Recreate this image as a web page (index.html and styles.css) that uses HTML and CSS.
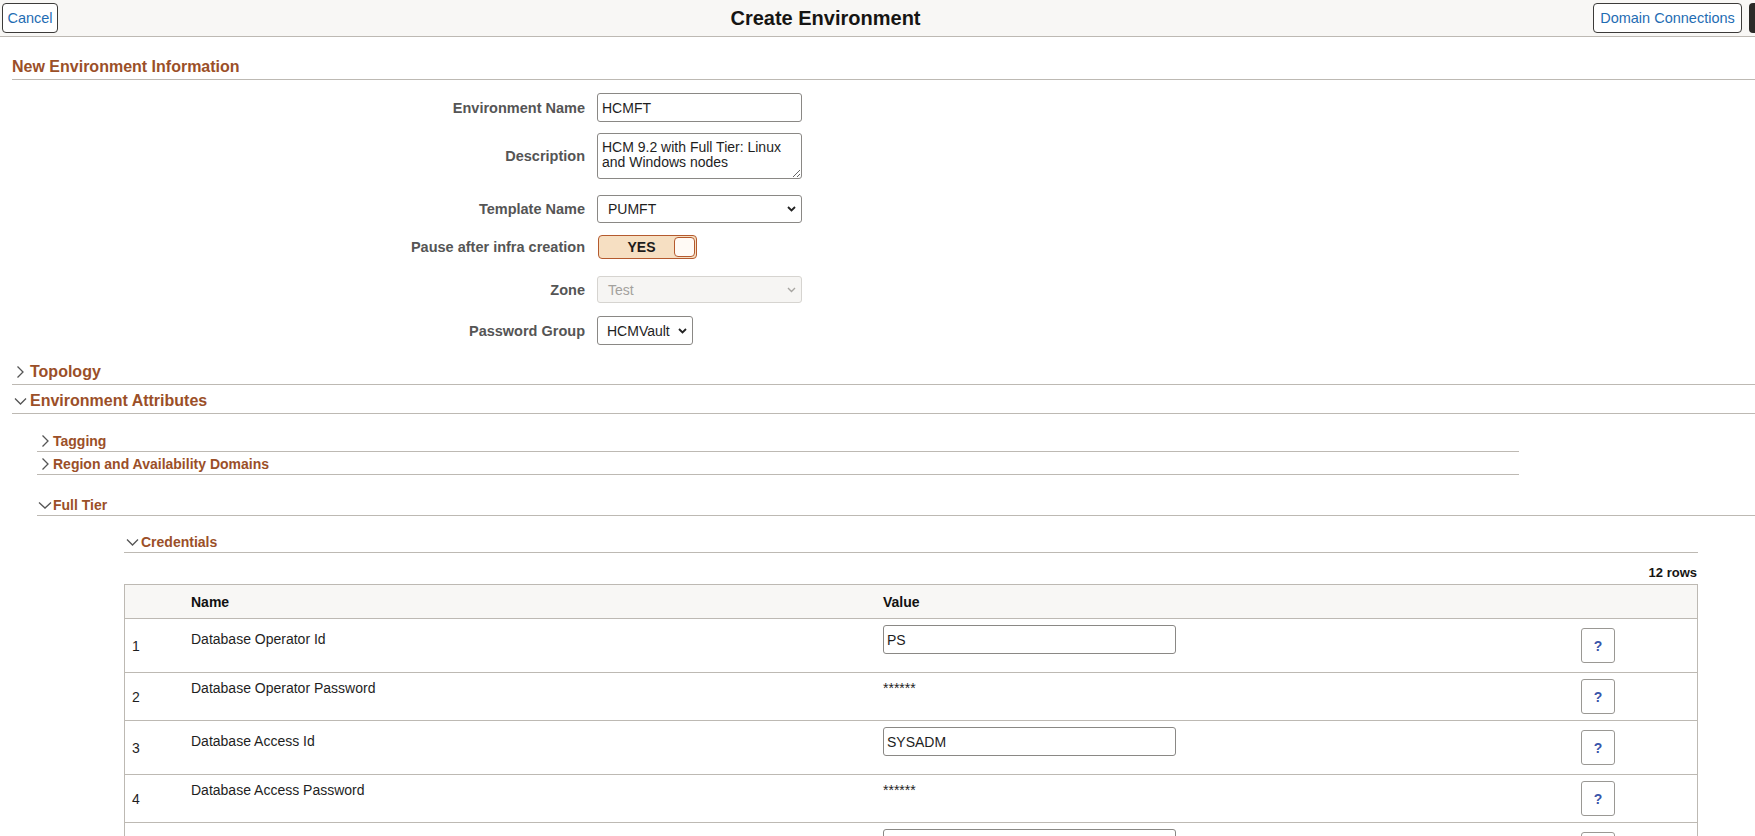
FILE: index.html
```html
<!DOCTYPE html>
<html lang="en">
<head>
<meta charset="utf-8">
<title>Create Environment</title>
<link rel="stylesheet" href="styles.css">
</head>
<body>
<header class="topbar">
  <button class="btn cancel">Cancel</button>
  <div class="title">Create Environment</div>
  <button class="btn domain">Domain Connections</button>
  <div class="more"></div>
</header>

<main class="content">
  <div class="sec-title">New Environment Information</div>

  <div class="frow r1">
    <label class="flabel">Environment Name</label>
    <input class="txt" type="text" value="HCMFT">
  </div>
  <div class="frow r2">
    <label class="flabel">Description</label>
    <textarea class="area">HCM 9.2 with Full Tier: Linux and Windows nodes</textarea>
  </div>
  <div class="frow r3">
    <label class="flabel">Template Name</label>
    <div class="sel wide"><span>PUMFT</span>
      <svg class="chev" width="9" height="6" viewBox="0 0 9 6"><polyline points="1,1 4.5,4.5 8,1" fill="none" stroke="#222" stroke-width="1.8"/></svg>
    </div>
  </div>
  <div class="frow r4">
    <label class="flabel">Pause after infra creation</label>
    <div class="toggle"><span class="toggle-label">YES</span><span class="knob"></span></div>
  </div>
  <div class="frow r5">
    <label class="flabel">Zone</label>
    <div class="sel wide disabled"><span>Test</span>
      <svg class="chev" width="9" height="6" viewBox="0 0 9 6"><polyline points="1,1 4.5,4.5 8,1" fill="none" stroke="#a8a6a2" stroke-width="1.4"/></svg>
    </div>
  </div>
  <div class="frow r6">
    <label class="flabel">Password Group</label>
    <div class="sel narrow"><span>HCMVault</span>
      <svg class="chev" width="9" height="6" viewBox="0 0 9 6"><polyline points="1,1 4.5,4.5 8,1" fill="none" stroke="#222" stroke-width="1.8"/></svg>
    </div>
  </div>

  <div class="grp-head topology">
    <svg class="ico" width="14" height="14" viewBox="0 0 14 14"><polyline points="3.5,1.5 9,7 3.5,12.5" fill="none" stroke="#555" stroke-width="1.3"/></svg>
    <span>Topology</span>
  </div>
  <div class="grp-head">
    <svg class="ico" width="14" height="14" viewBox="0 0 14 14"><polyline points="1,4.5 6.5,10 12,4.5" fill="none" stroke="#555" stroke-width="1.3"/></svg>
    <span>Environment Attributes</span>
  </div>

  <div class="subs">
    <div class="sub-head short">
      <svg class="ico" width="14" height="14" viewBox="0 0 14 14"><polyline points="4.5,1.5 10,7 4.5,12.5" fill="none" stroke="#555" stroke-width="1.3"/></svg>
      <span>Tagging</span>
    </div>
    <div class="sub-head short">
      <svg class="ico" width="14" height="14" viewBox="0 0 14 14"><polyline points="4.5,1.5 10,7 4.5,12.5" fill="none" stroke="#555" stroke-width="1.3"/></svg>
      <span>Region and Availability Domains</span>
    </div>
    <div class="sub-head fulltier">
      <svg class="ico" width="14" height="14" viewBox="0 0 14 14"><polyline points="1,4.5 7,10 13,4.5" fill="none" stroke="#555" stroke-width="1.3"/></svg>
      <span>Full Tier</span>
    </div>

    <div class="cred">
      <div class="sub-head credhead">
        <svg class="ico" width="14" height="14" viewBox="0 0 14 14"><polyline points="1,4.5 6.5,10 12,4.5" fill="none" stroke="#555" stroke-width="1.3"/></svg>
        <span>Credentials</span>
      </div>
      <div class="rows-count">12 rows</div>
      <div class="tbl">
        <div class="tr th">
          <div class="c-num"></div>
          <div class="c-name">Name</div>
          <div class="c-val">Value</div>
          <div class="c-btn"></div>
        </div>
        <div class="tr tall">
          <div class="c-num">1</div>
          <div class="c-name">Database Operator Id</div>
          <div class="c-val inp"><input class="vinput" type="text" value="PS"></div>
          <div class="c-btn"><button class="help">?</button></div>
        </div>
        <div class="tr">
          <div class="c-num">2</div>
          <div class="c-name">Database Operator Password</div>
          <div class="c-val">******</div>
          <div class="c-btn"><button class="help">?</button></div>
        </div>
        <div class="tr tall">
          <div class="c-num">3</div>
          <div class="c-name">Database Access Id</div>
          <div class="c-val inp"><input class="vinput" type="text" value="SYSADM"></div>
          <div class="c-btn"><button class="help">?</button></div>
        </div>
        <div class="tr">
          <div class="c-num">4</div>
          <div class="c-name">Database Access Password</div>
          <div class="c-val">******</div>
          <div class="c-btn"><button class="help">?</button></div>
        </div>
        <div class="tr tall">
          <div class="c-num">5</div>
          <div class="c-name">Weblogic Administrator Username</div>
          <div class="c-val inp"><input class="vinput" type="text" value="system"></div>
          <div class="c-btn"><button class="help">?</button></div>
        </div>
      </div>
    </div>
  </div>
</main>
</body>
</html>
```
FILE: styles.css
```css
* { box-sizing: border-box; }

body {
  margin: 0;
  font-family: "Liberation Sans", Arial, sans-serif;
  font-size: 14px;
  color: #222;
  background: #fff;
}

/* top bar */
.topbar {
  display: flex;
  align-items: center;
  height: 37px;
  padding-left: 2px;
  background: #f8f7f5;
  border-bottom: 1px solid #bdb9b3;
}
.btn {
  height: 30px;
  padding: 0 4px;
  background: #fff;
  border: 1px solid #3c3b39;
  border-radius: 4px;
  color: #1f6db3;
  font-family: "Liberation Sans", Arial, sans-serif;
  font-size: 14.5px;
}
.cancel { width: 56px; }
.domain { width: 149px; }
.title {
  flex: 1;
  text-align: center;
  font-size: 20px;
  font-weight: bold;
  color: #161513;
}
.more {
  width: 6px;
  height: 30px;
  margin-left: 7px;
  background: #2b2a28;
  border-radius: 4px 0 0 4px;
}

/* content */
.content { padding-left: 12px; }

.sec-title {
  margin-top: 20px;
  padding-bottom: 2px;
  line-height: 20px;
  font-size: 16px;
  font-weight: bold;
  color: #9b4f28;
  border-bottom: 1px solid #bdb9b3;
}

/* form */
.frow { display: flex; align-items: center; }
.r1 { margin-top: 13px; }
.r2 { margin-top: 11px; }
.r3 { margin-top: 16px; }
.r4 { margin-top: 12px; }
.r5 { margin-top: 17px; }
.r6 { margin-top: 13px; }

.flabel {
  width: 585px;
  padding-right: 12px;
  text-align: right;
  font-size: 14.5px;
  font-weight: bold;
  color: #555;
}
.txt {
  width: 205px;
  height: 29px;
  padding: 0 4px;
  border: 1px solid #8a8885;
  border-radius: 3px;
  font-family: "Liberation Sans", Arial, sans-serif;
  font-size: 14px;
  color: #1e1e1e;
}
.area {
  width: 205px;
  height: 46px;
  padding: 6px 4px;
  border: 1px solid #8a8885;
  border-radius: 3px;
  font-family: "Liberation Sans", Arial, sans-serif;
  font-size: 14px;
  line-height: 15px;
  color: #1e1e1e;
  resize: both;
}
.sel {
  display: flex;
  align-items: center;
  justify-content: space-between;
  padding: 0 5px 0 10px;
  background: #fff;
  border: 1px solid #8a8885;
  border-radius: 3px;
  font-size: 14px;
  color: #1e1e1e;
}
.sel.wide { width: 205px; height: 28px; }
.sel.narrow { width: 96px; height: 29px; padding-left: 9px; }
.sel.disabled {
  height: 27px;
  background: #f6f5f3;
  border-color: #d6d4d0;
  color: #a3a19d;
}
.chev { display: block; }

.toggle {
  display: flex;
  align-items: center;
  width: 99px;
  height: 24px;
  margin-left: 1px;
  padding-right: 1px;
  background: #f6dfc2;
  border: 1px solid #b45a2e;
  border-radius: 4px;
}
.toggle-label {
  flex: 1;
  padding-left: 10px;
  text-align: center;
  font-size: 14px;
  font-weight: bold;
  color: #1c1b1a;
}
.knob {
  width: 21px;
  height: 20px;
  background: #fffaf5;
  border: 1px solid #b45a2e;
  border-radius: 4px;
}

/* collapsible headers */
.grp-head {
  display: flex;
  align-items: center;
  gap: 2px;
  padding: 6px 0 2px 2px;
  line-height: 20px;
  font-size: 16px;
  font-weight: bold;
  color: #9b4f28;
  border-bottom: 1px solid #bdb9b3;
}
.topology { margin-top: 11px; }
.ico { display: block; flex: none; }

.subs { margin-left: 25px; margin-top: 15px; }
.sub-head {
  display: flex;
  align-items: center;
  gap: 1px;
  padding: 4px 0 2px 1px;
  line-height: 16px;
  font-size: 14px;
  font-weight: bold;
  color: #9b4f28;
  border-bottom: 1px solid #bdb9b3;
}
.sub-head.short { width: 1482px; }
.fulltier { margin-top: 18px; }

.cred { margin-left: 87px; margin-right: 57px; margin-top: 14px; }
.credhead { padding-left: 2px; }

.rows-count {
  margin-top: 12px;
  margin-bottom: 3px;
  padding-right: 1px;
  line-height: 16px;
  text-align: right;
  font-size: 13px;
  font-weight: bold;
  color: #161513;
}

/* table */
.tbl { border: 1px solid #bdb9b3; border-bottom: none; }
.tr {
  display: grid;
  grid-template-columns: 66px 692px 690px 1fr;
  align-items: start;
  height: 48px;
  border-bottom: 1px solid #bdb9b3;
  font-size: 14px;
  color: #1e1e1e;
}
.tr.tall { height: 54px; }
.tr.th {
  height: 34px;
  align-items: center;
  background: #f8f7f5;
  font-weight: bold;
  color: #111;
}
.c-num { padding-left: 7px; align-self: center; }
.c-name, .c-val { padding-top: 7px; line-height: 16px; }
.tall .c-name { padding-top: 12px; }
.th .c-name, .th .c-val { padding-top: 0; }
.c-val.inp { padding-top: 6px; }
.c-btn { padding-left: 8px; align-self: center; }

.vinput {
  display: block;
  width: 293px;
  height: 29px;
  padding: 0 3px;
  border: 1px solid #8a8885;
  border-radius: 3px;
  font-family: "Liberation Sans", Arial, sans-serif;
  font-size: 14px;
  color: #1e1e1e;
}
.help {
  display: block;
  width: 34px;
  height: 35px;
  padding: 0;
  background: #fff;
  border: 1px solid #9a9894;
  border-radius: 3px;
  font-family: "Liberation Sans", Arial, sans-serif;
  font-size: 14px;
  font-weight: bold;
  color: #3a55aa;
}
```
